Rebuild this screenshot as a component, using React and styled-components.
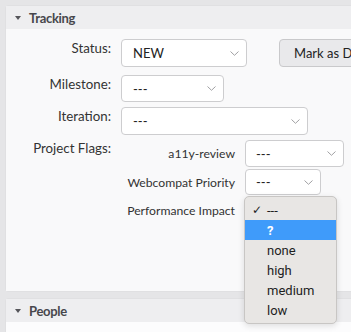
import React from "react";
import styled, { createGlobalStyle } from "styled-components";

const Global = createGlobalStyle`
  html, body { margin: 0; padding: 0; overflow: hidden; }
  body {
    background: #e5e5e7;
    font-family: Lato, "Open Sans", sans-serif;
    color: #222;
  }
`;

const Page = styled.div`
  width: 640px;
  padding: 6px;
  display: flex;
  flex-direction: column;
  gap: 8px;
`;

const Card = styled.section`
  background: #f9f9fa;
  box-shadow: 0 0 1px rgba(0, 0, 0, 0.2);
  border-radius: 2px;
`;

const CardHeader = styled.header`
  height: 23px;
  background: #eeeef0;
  display: flex;
  align-items: center;
  gap: 8px;
  padding-left: 9px;
  font-weight: 700;
  font-size: 13px;
  letter-spacing: -0.3px;
  color: #47474c;
`;

const Twisty = styled.span`
  width: 0;
  height: 0;
  border-left: 3px solid transparent;
  border-right: 3px solid transparent;
  border-top: 4px solid #55555a;
  margin-top: 1px;
`;

const CardBody = styled.div`
  padding: 10px 0 ${(p) => p.$bottom || 0}px 0;
  min-height: ${(p) => p.$min || 0}px;
  background: ${(p) => p.$bg || "#f9f9fa"};
`;

const Form = styled.div`
  display: grid;
  grid-template-columns: 105px 1fr;
  column-gap: 10px;
`;

const Label = styled.div`
  text-align: right;
  font-size: 13.3px;
  line-height: 18px;
  color: #333;
  white-space: nowrap;
  margin-top: ${(p) => p.$top || 0}px;
`;

const Field = styled.div`
  display: flex;
  align-items: center;
  gap: 32px;
  margin-top: ${(p) => p.$top || 0}px;
`;

const SelectBox = styled.div`
  box-sizing: border-box;
  width: ${(p) => p.$w}px;
  height: ${(p) => p.$h || 28}px;
  background: #fff;
  border: 1px solid #cdcdcf;
  border-radius: 4px;
  display: flex;
  align-items: center;
  justify-content: space-between;
  padding: 0 7px 0 ${(p) => p.$pl || 11}px;
  font-size: 13px;
  color: #222;
  flex-shrink: 0;
`;

const Value = styled.span`
  visibility: ${(p) => (p.$hidden ? "hidden" : "visible")};
`;

const Button = styled.div`
  box-sizing: border-box;
  height: 28px;
  padding: 0 14px;
  display: flex;
  align-items: center;
  background: #e9e9eb;
  border: 1px solid #c9c9cb;
  border-radius: 4px;
  font-size: 13px;
  color: #222;
  white-space: nowrap;
  flex-shrink: 0;
`;

const Flags = styled.div`
  display: grid;
  grid-template-columns: 114px auto;
  column-gap: 10px;
  row-gap: 2px;
  align-items: center;
  justify-items: start;
  position: relative;
`;

const FlagLabel = styled.div`
  justify-self: end;
  font-size: 12.2px;
  color: #333;
  white-space: nowrap;
`;

const Popup = styled.div`
  position: absolute;
  left: 123px;
  top: 56px;
  width: 93px;
  box-sizing: border-box;
  padding: 3px 0 3px;
  background: #e8e6e4;
  border: 1px solid #c8c6c4;
  border-radius: 5px;
  box-shadow: 0 2px 6px rgba(0, 0, 0, 0.12);
  font-family: Roboto, "Liberation Sans", sans-serif;
  font-size: 13px;
  z-index: 2;
`;

const Item = styled.div`
  height: 20px;
  display: flex;
  align-items: center;
  padding-left: 7px;
  background: ${(p) => (p.$active ? "#3f9bfa" : "transparent")};
  color: ${(p) => (p.$active ? "#fff" : "#1e1e1e")};
  font-weight: ${(p) => (p.$active ? 700 : 400)};
`;

const Check = styled.span`
  display: inline-block;
  width: 15px;
  flex-shrink: 0;
  font-family: "DejaVu Sans", sans-serif;
  font-size: 12px;
`;

const Chevron = () => (
  <svg width="9" height="5" viewBox="0 0 9 5" style={{ flexShrink: 0 }}>
    <path d="M0.5 0.5 L4.5 4.3 L8.5 0.5" fill="none" stroke="#a0a0a3" strokeWidth="1" />
  </svg>
);

const Select = ({ value, w, h, pl, covered }) => (
  <SelectBox $w={w} $h={h} $pl={pl}>
    <Value $hidden={covered}>{value}</Value>
    <Chevron />
  </SelectBox>
);

const options = ["---", "?", "none", "high", "medium", "low"];

export default function App() {
  return (
    <>
      <Global />
      <Page>
        <Card>
          <CardHeader>
            <Twisty />
            Tracking
          </CardHeader>
          <CardBody $bottom={68}>
            <Form>
              <Label>Status:</Label>
              <Field>
                <Select value="NEW" w={126} />
                <Button>Mark as Duplicate</Button>
              </Field>

              <Label $top={8}>Milestone:</Label>
              <Field $top={8}>
                <Select value="---" w={103} h={27} />
              </Field>

              <Label $top={5}>Iteration:</Label>
              <Field $top={5}>
                <Select value="---" w={187} />
              </Field>

              <Label $top={4}>Project Flags:</Label>
              <Field $top={5}>
                <Flags>
                  <FlagLabel>a11y-review</FlagLabel>
                  <Select value="---" w={99} h={27} pl={10} />
                  <FlagLabel>Webcompat Priority</FlagLabel>
                  <Select value="---" w={76} h={26} pl={10} />
                  <FlagLabel>Performance Impact</FlagLabel>
                  <Select value="---" w={92} h={26} pl={10} covered />
                  <Popup>
                    {options.map((o, i) => (
                      <Item key={o} $active={o === "?"}>
                        <Check>{i === 0 ? "✓" : ""}</Check>
                        {o}
                      </Item>
                    ))}
                  </Popup>
                </Flags>
              </Field>
            </Form>
          </CardBody>
        </Card>
        <Card>
          <CardHeader>
            <Twisty />
            People
          </CardHeader>
          <CardBody $min={80} $bg="#fcfcfd" />
        </Card>
      </Page>
    </>
  );
}
